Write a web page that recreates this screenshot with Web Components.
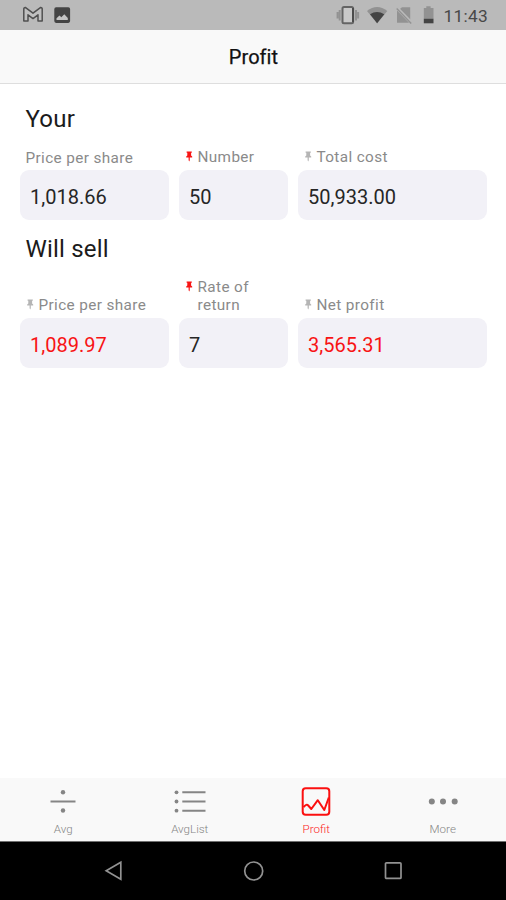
<!DOCTYPE html>
<html lang="en">
<head>
<meta charset="utf-8">
<title>Profit</title>
<style>
body { margin: 0; font-family: Roboto, "Liberation Sans", sans-serif; background: #fff; overflow: hidden; }
</style>
</head>
<body>
<profit-app></profit-app>
<script>
const define = (name, html) => customElements.define(name, class extends HTMLElement {
  constructor() {
    super();
    this.attachShadow({ mode: 'open' }).innerHTML = html;
  }
});

define('status-bar', `
<style>
:host { display: flex; align-items: center; height: 30px; box-sizing: border-box; padding: 0 18px 0 22px; background: #bababa; color: #484848; }
svg { display: block; flex: none; }
.system { margin-left: auto; margin-right: 6px; }
span { font-size: 17.3px; letter-spacing: .3px; line-height: 20px; padding-top: 2px; }
</style>
<svg width="52" height="30" viewBox="22 0 52 30">
  <path d="M23.8 8.6Q24 7.4 25.6 7.6L33 13.2L40.4 7.6Q42 7.4 42.2 8.6V21H38V14.8L33 18.6L28 14.8V21H23.8Z" fill="#c0c0c0" stroke="#505050" stroke-width="1.5" stroke-linejoin="round"/>
  <rect x="54.3" y="7.3" width="15.8" height="15.6" rx="1.8" fill="#444"/>
  <path d="M56.5 20V18.2L59.5 15.4L61.3 17.2L64.3 14.3L67.8 18V20Z" fill="#c4c4c4"/>
</svg>
<svg class="system" width="101" height="30" viewBox="336 0 101 30">
  <path d="M337.6 12V18.5M339.7 10V20.5M356 10V20.5M358.1 12V18.5" stroke="#929292" stroke-width="2"/>
  <rect x="342.5" y="7" width="10.6" height="16.3" rx="1.5" fill="#c9c9c9" stroke="#646464" stroke-width="2"/>
  <path d="M353 8V22" stroke="#4c4c4c" stroke-width="2"/>
  <path d="M367 11Q377 3 387.3 11L377.1 23.3Z" fill="#929292"/>
  <path d="M370 14.3Q377 9.5 384.3 14.3L377.1 23.3Z" fill="#444"/>
  <path d="M402 7.3H410.2V19.6L399.6 9.3ZM397 10.4L409.2 22.7H397Z" fill="#929292"/>
  <path d="M397 7.8L411.4 22.9" stroke="#bababa" stroke-width="3"/>
  <path d="M396.7 8.6L411.2 23.6" stroke="#929292" stroke-width="1.4"/>
  <path d="M423.8 8H426.3V6.2H430.6V8H433.5V19H423.8Z" fill="#929292"/>
  <path d="M423.8 18.8H433.5V23.3H423.8Z" fill="#444"/>
</svg>
<span><slot></slot></span>`);

define('title-bar', `
<style>
:host { display: flex; align-items: center; justify-content: center; height: 54px; box-sizing: border-box; padding: 1px 0 0 1px; background: #f9f9f9; border-bottom: 1px solid #dedede; color: #111; font-size: 20px; letter-spacing: .05px; -webkit-text-stroke: .25px #111; }
</style><slot></slot>`);

define('form-section', `
<style>
:host { display: block; }
h2 { margin: 0 0 13.5px 5.5px; font-size: 24px; font-weight: 400; line-height: 30px; letter-spacing: .2px; color: #1b1b1b; }
div { display: grid; grid-template-columns: 149px 109px 189px; column-gap: 10px; align-items: end; }
</style>
<h2><slot name="heading"></slot></h2>
<div><slot></slot></div>`);

define('pin-icon', `
<style>
:host { display: block; width: 7px; height: 12px; margin: 3px 5px 0 0; color: #b5b5b5; }
svg { display: block; }
</style>
<svg width="7" height="12" viewBox="0 0 7 12"><path d="M.6 .6H5.8V1.8H5.1V4.4L6.2 5.6V6.6H3.8V9.2L3.2 10.4L2.6 9.2V6.6H.2V5.6L1.3 4.4V1.8H.6Z" fill="currentColor"/></svg>`);

define('value-field', `
<style>
:host { display: block; color: #262626; }
.label { display: flex; padding: 0 18px 4px 6.5px; font-size: 15.3px; line-height: 18px; letter-spacing: .38px; color: #8a8a8a; }
:host([plain]) .label { padding: 0 10px 3px 5.5px; }
.box { height: 50px; box-sizing: border-box; padding: 4px 0 0 10px; border-radius: 9px; background: #f2f1f7; display: flex; align-items: center; font-size: 20px; }
::slotted(pin-icon) { flex: none; }
:host([pin]) ::slotted(pin-icon) { color: #f81414; }
:host([result]) .box { color: #f81414; }
</style>
<div class="label"><slot name="pin"></slot><span><slot name="label"></slot></span></div>
<div class="box"><slot></slot></div>`);

define('tab-item', `
<style>
:host { display: flex; flex-direction: column; align-items: center; flex: 1; color: #858585; padding-top: 7px; font-size: 11.6px; line-height: 14px; font-weight: 300; }
:host([active]) { color: #fc1c1c; }
.icon { height: 32px; margin-bottom: 5px; }
</style>
<div class="icon"><slot name="icon"></slot></div>
<span><slot></slot></span>`);

define('tab-bar', `
<style>
:host { display: flex; height: 63px; background: #f9f9f9; }
</style><slot></slot>`);

define('system-nav', `
<style>
:host { display: flex; align-items: center; justify-content: space-between; height: 59px; box-sizing: border-box; padding: 0 101px 0 103px; background: #000; border-top: 1px solid #707070; }
</style>
<svg width="22" height="22" viewBox="0 0 22 22"><path d="M17.8 2.2V19.3L3.2 10.8Z" fill="none" stroke="#929292" stroke-width="1.7"/></svg>
<svg width="22" height="22" viewBox="0 0 22 22"><circle cx="10.7" cy="11" r="9" fill="none" stroke="#929292" stroke-width="1.7"/></svg>
<svg width="22" height="22" viewBox="0 0 22 22"><rect x="2.5" y="2.8" width="15.5" height="15.6" rx="1" fill="none" stroke="#929292" stroke-width="1.7"/></svg>`);

define('profit-app', `
<style>
:host { display: flex; flex-direction: column; width: 506px; height: 900px; }
main { flex: 1; padding: 20px 0 0 20px; }
form-section + form-section { margin-top: 14.5px; }
svg { display: block; }
</style>
<status-bar>11:43</status-bar>
<title-bar>Profit</title-bar>
<main>
  <form-section>
    <span slot="heading">Your</span>
    <value-field plain><span slot="label">Price per share</span>1,018.66</value-field>
    <value-field pin><pin-icon slot="pin"></pin-icon><span slot="label">Number</span>50</value-field>
    <value-field><pin-icon slot="pin"></pin-icon><span slot="label">Total cost</span>50,933.00</value-field>
  </form-section>
  <form-section>
    <span slot="heading">Will sell</span>
    <value-field result><pin-icon slot="pin"></pin-icon><span slot="label">Price per share</span>1,089.97</value-field>
    <value-field pin><pin-icon slot="pin"></pin-icon><span slot="label">Rate of return</span>7</value-field>
    <value-field result><pin-icon slot="pin"></pin-icon><span slot="label">Net profit</span>3,565.31</value-field>
  </form-section>
</main>
<tab-bar>
  <tab-item><svg slot="icon" width="32" height="32" viewBox="0 0 32 32"><path d="M3.5 16.5H28.5" stroke="#858585" stroke-width="2"/><circle cx="16" cy="7.3" r="2.2" fill="#858585"/><circle cx="16" cy="25.5" r="2.2" fill="#858585"/></svg>Avg</tab-item>
  <tab-item><svg slot="icon" width="32" height="32" viewBox="0 0 32 32"><path d="M8.3 7.3H31.5M8.3 16.5H31.5M8.3 25.7H31.5" stroke="#858585" stroke-width="2"/><g fill="#858585"><circle cx="2.5" cy="7.3" r="1.9"/><circle cx="2.5" cy="16.5" r="1.9"/><circle cx="2.5" cy="25.7" r="1.9"/></g></svg>AvgList</tab-item>
  <tab-item active><svg slot="icon" width="32" height="32" viewBox="0 0 32 32"><g fill="none" stroke="#fb1010" stroke-width="2"><rect x="2.7" y="3.3" width="26.6" height="26.5" rx="3"/><path d="M3.5 22.2Q6.5 18.5 8.2 20.5L11.3 24L17.8 15.2L24.3 25L28.8 12.5" stroke-linejoin="round"/></g></svg>Profit</tab-item>
  <tab-item><svg slot="icon" width="32" height="32" viewBox="0 0 32 32"><g fill="#858585"><circle cx="4.8" cy="16.5" r="3"/><circle cx="16" cy="16.5" r="3"/><circle cx="27.7" cy="16.5" r="3"/></g></svg>More</tab-item>
</tab-bar>
<system-nav></system-nav>`);
</script>
</body>
</html>
